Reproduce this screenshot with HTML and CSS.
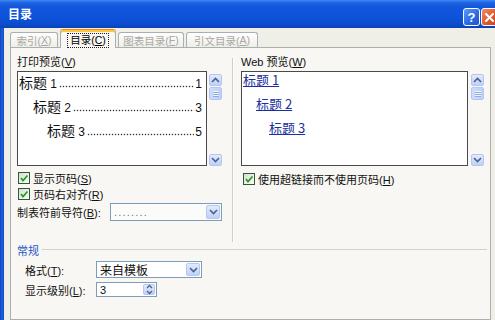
FILE: index.html
```html
<!DOCTYPE html>
<html>
<head>
<meta charset="utf-8">
<link rel="stylesheet" href="styles.css">
</head>
<body>
<div class="window">
  <div class="titlebar">
    <span class="title">目录</span>
    <div class="tbtns">
      <span class="btn help">?</span>
      <span class="btn close"><svg width="11" height="11" viewBox="0 0 11 11"><path d="M2 2 L9 9 M9 2 L2 9" stroke="#fff" stroke-width="2" stroke-linecap="round"/></svg></span>
    </div>
  </div>
  <div class="client">
    <div class="tabs">
      <div class="tab t1">索引(<u>X</u>)</div>
      <div class="tab t2 active"><span class="focus">目录(<u>C</u>)</span></div>
      <div class="tab t3">图表目录(<u>F</u>)</div>
      <div class="tab t4">引文目录(<u>A</u>)</div>
    </div>
    <div class="panel">
      <div class="top">
        <div class="col left">
          <div class="lbl">打印预览(<u>V</u>)</div>
          <div class="prow">
            <div class="preview print">
              <div class="toc"><span class="t">标题</span><span class="n">&nbsp;1</span><span class="dots"></span><span class="pg">1</span></div>
              <div class="toc i1"><span class="t">标题</span><span class="n">&nbsp;2</span><span class="dots"></span><span class="pg">3</span></div>
              <div class="toc i2"><span class="t">标题</span><span class="n">&nbsp;3</span><span class="dots"></span><span class="pg">5</span></div>
            </div>
            <div class="sb">
              <div class="arrow"><svg width="9" height="6" viewBox="0 0 9 6"><path d="M1 5 L4.5 1.5 L8 5" fill="none" stroke="#4d6185" stroke-width="1.6"/></svg></div>
              <div class="thumb"><i></i><i></i><i></i></div>
              <div class="spacer"></div>
              <div class="arrow"><svg width="9" height="6" viewBox="0 0 9 6"><path d="M1 1 L4.5 4.5 L8 1" fill="none" stroke="#4d6185" stroke-width="1.6"/></svg></div>
            </div>
          </div>
          <div class="chk"><span class="box"><svg width="10" height="10" viewBox="0 0 10 10"><path d="M2 5 L4 7.5 L8.5 2.5" fill="none" stroke="#21a121" stroke-width="1.8"/></svg></span><span>显示页码(<u>S</u>)</span></div>
          <div class="chk c2"><span class="box"><svg width="10" height="10" viewBox="0 0 10 10"><path d="M2 5 L4 7.5 L8.5 2.5" fill="none" stroke="#21a121" stroke-width="1.8"/></svg></span><span>页码右对齐(<u>R</u>)</span></div>
          <div class="leader">
            <span>制表符前导符(<u>B</u>):</span>
            <div class="combo lcombo"><span class="ctext dim">........</span><span class="dd"><svg width="9" height="6" viewBox="0 0 9 6"><path d="M1 1 L4.5 4.5 L8 1" fill="none" stroke="#4d6185" stroke-width="1.6"/></svg></span></div>
          </div>
        </div>
        <div class="vsep"></div>
        <div class="col right">
          <div class="lbl">Web 预览(<u>W</u>)</div>
          <div class="prow wrow">
            <div class="preview web">
              <div class="wl"><span class="lnk">标题 1</span></div>
              <div class="wl i1"><span class="lnk">标题 2</span></div>
              <div class="wl i2"><span class="lnk">标题 3</span></div>
            </div>
            <div class="sb">
              <div class="arrow"><svg width="9" height="6" viewBox="0 0 9 6"><path d="M1 5 L4.5 1.5 L8 5" fill="none" stroke="#4d6185" stroke-width="1.6"/></svg></div>
              <div class="thumb"><i></i><i></i><i></i></div>
              <div class="spacer"></div>
              <div class="arrow"><svg width="9" height="6" viewBox="0 0 9 6"><path d="M1 1 L4.5 4.5 L8 1" fill="none" stroke="#4d6185" stroke-width="1.6"/></svg></div>
            </div>
          </div>
          <div class="chk c3"><span class="box"><svg width="10" height="10" viewBox="0 0 10 10"><path d="M2 5 L4 7.5 L8.5 2.5" fill="none" stroke="#21a121" stroke-width="1.8"/></svg></span><span>使用超链接而不使用页码(<u>H</u>)</span></div>
        </div>
      </div>
      <div class="group">
        <div class="gtitle"><span>常规</span><div class="hline"></div></div>
        <div class="field f1">
          <span class="flabel">格式(<u>T</u>):</span>
          <div class="combo fcombo"><span class="ctext">来自模板</span><span class="dd"><svg width="9" height="6" viewBox="0 0 9 6"><path d="M1 1 L4.5 4.5 L8 1" fill="none" stroke="#4d6185" stroke-width="1.6"/></svg></span></div>
        </div>
        <div class="field f2">
          <span class="flabel">显示级别(<u>L</u>):</span>
          <div class="spin"><span class="ctext">3</span><span class="sbtn"><svg width="7" height="11" viewBox="0 0 7 11"><path d="M1 4 L3.5 1.5 L6 4 M1 7 L3.5 9.5 L6 7" fill="none" stroke="#4d6185" stroke-width="1.3"/></svg></span></div>
        </div>
      </div>
    </div>
  </div>
</div>
</body>
</html>
```

FILE: styles.css
```css
* { box-sizing: border-box; }
body {
  margin: 0;
  width: 495px;
  height: 320px;
  overflow: hidden;
  font-family: "Liberation Sans", "Noto Sans CJK SC", sans-serif;
  font-size: 11px;
  color: #111;
}
u { text-decoration: underline; }
.window {
  width: 495px;
  height: 320px;
  display: flex;
  flex-direction: column;
  background: linear-gradient(to right, #0a3aa8 0, #1a5ad8 1px, #1a5ad8 3px, #0c45c0 4px);
  overflow: hidden;
}
.titlebar {
  height: 28px;
  flex: none;
  display: flex;
  justify-content: space-between;
  align-items: flex-start;
  padding-left: 8px;
  background: linear-gradient(to bottom, #3d8af7 0%, #2468e2 8%, #1257dc 22%, #0d53da 60%, #0b4dd0 85%, #0a42b5 100%);
  overflow: hidden;
}
.title {
  color: #fff;
  font-weight: bold;
  font-size: 12px;
  line-height: 28px;
  font-family: "Noto Sans CJK SC", sans-serif;
}
.tbtns {
  display: flex;
  gap: 1px;
  margin-top: 8px;
  margin-right: -3px;
}
.btn {
  width: 17px;
  height: 18px;
  border: 1px solid #fff;
  border-radius: 3px;
  display: flex;
  align-items: center;
  justify-content: center;
}
.help {
  background: linear-gradient(135deg, #5b9bf8, #2a66e2 60%, #1f55cc);
  color: #fff;
  font-weight: bold;
  font-size: 13px;
  font-family: "Liberation Sans", sans-serif;
}
.close {
  background: linear-gradient(135deg, #f08a68, #e05a30 55%, #c8401e);
}
.client {
  flex: 1;
  margin-left: 4px;
  background: #efeee7;
  padding: 1px 0 0 6px;
  display: flex;
  flex-direction: column;
  min-height: 0;
}
.tabs {
  display: flex;
  align-items: flex-end;
  gap: 2px;
  height: 18px;
  flex: none;
  position: relative;
  z-index: 1;
}
.tab {
  height: 15px;
  border: 1px solid #a9b0b1;
  border-bottom: none;
  border-radius: 3px 3px 0 0;
  background: linear-gradient(#fefefe, #efeee8);
  color: #a9a8a2;
  display: flex;
  align-items: center;
  justify-content: center;
  white-space: nowrap;
  font-size: 10.5px;
}
.t1 { width: 48px; }
.t2 { width: 56px; }
.t3 { width: 66px; }
.t4 { width: 72px; }
.tab.active {
  height: 19px;
  margin-bottom: -1px;
  border-top: 1px solid #e68b2c;
  box-shadow: inset 0 2px 0 #ffc73c;
  background: #f8f7f3;
  color: #000;
  padding-top: 2px;
}
.focus {
  outline: 1px dotted #222;
  padding: 0 2px;
  line-height: 13px;
}
.panel {
  width: 481px;
  flex: 1;
  border: 1px solid #a9b0b1;
  background: #f8f7f3;
  padding: 8px 6px 0 6px;
}
.top {
  display: flex;
  height: 186px;
}
.col.left { width: 205px; flex: none; }
.col.right { width: 243px; flex: none; }
.vsep {
  width: 2px;
  height: 184px;
  margin: 2px 7px 0 10px;
  border-left: 1px solid #cfcec5;
  border-right: 1px solid #fff;
  flex: none;
}
.lbl {
  height: 13px;
  line-height: 13px;
  margin-bottom: 2px;
  white-space: nowrap;
}
.prow {
  display: flex;
  height: 95px;
  gap: 2px;
}
.wrow { gap: 3px; }
.preview {
  flex: 1;
  background: #fff;
  border: 1px solid #4a4a4a;
  overflow: hidden;
}
.print { padding: 0 4px 0 1px; }
.toc {
  display: flex;
  align-items: baseline;
  height: 20px;
  line-height: 20px;
  margin-bottom: 4px;
  white-space: nowrap;
}
.toc .t {
  font-family: "Noto Sans CJK SC", sans-serif;
  font-size: 14px;
}
.toc .n, .toc .pg {
  font-size: 12px;
  font-family: "Liberation Sans", sans-serif;
}
.toc .dots {
  flex: 1;
  align-self: stretch;
  margin: 0 1px 0 2px;
  background-image: radial-gradient(circle, #333 0.75px, transparent 1.05px);
  background-size: 3px 3px;
  background-repeat: repeat-x;
  background-position: 0 13px;
}
.i1 { padding-left: 14px; }
.i2 { padding-left: 28px; }
.web { padding: 0 0 0 1px; }
.wl {
  height: 16px;
  line-height: 16px;
  margin-bottom: 8px;
  white-space: nowrap;
}
.wl.i1 { padding-left: 13px; }
.wl.i2 { padding-left: 26px; }
.lnk {
  color: #1b2f9e;
  text-decoration: underline;
  font-size: 13px;
  font-family: "Noto Sans CJK SC", sans-serif;
}
.sb {
  width: 13px;
  flex: none;
  display: flex;
  flex-direction: column;
  padding-top: 3px;
}
.arrow {
  height: 12px;
  border: 1px solid #b4c6f1;
  border-radius: 2px;
  background: linear-gradient(#e2ebfe, #bfd1f8);
  display: flex;
  align-items: center;
  justify-content: center;
}
.thumb {
  height: 13px;
  margin-top: 1px;
  border: 1px solid #b4c6f1;
  border-radius: 2px;
  background: linear-gradient(to right, #cfdcfb, #bdd0f8);
  display: flex;
  flex-direction: column;
  align-items: center;
  justify-content: center;
  gap: 1px;
}
.thumb i {
  display: block;
  width: 6px;
  height: 1px;
  background: #eef3ff;
  box-shadow: 0 1px 0 #98acdc;
}
.spacer { flex: 1; }
.chk {
  display: flex;
  align-items: center;
  gap: 3px;
  height: 13px;
  margin-top: 5px;
  margin-left: 1px;
  white-space: nowrap;
}
.chk.c2 { margin-top: 3px; }
.chk.c3 { margin-top: 6px; margin-left: 2px; }
.box {
  width: 12px;
  height: 12px;
  border: 1px solid #2b5c3a;
  background: linear-gradient(135deg, #dcdcd6, #fbfbf9);
  display: flex;
  align-items: center;
  justify-content: center;
  flex: none;
}
.leader {
  display: flex;
  align-items: center;
  margin-top: 3px;
  height: 18px;
  white-space: nowrap;
}
.combo, .spin {
  display: flex;
  align-items: stretch;
  border: 1px solid #7f9db9;
  background: #fff;
}
.lcombo {
  width: 112px;
  height: 18px;
  margin-left: auto;
  background: #fbfbfa;
}
.ctext {
  flex: 1;
  padding-left: 3px;
  display: flex;
  align-items: center;
  white-space: nowrap;
}
.dim { color: #777; letter-spacing: 1.2px; font-size: 11px; }
.dd {
  width: 14px;
  margin: 1px;
  border: 1px solid #b4c6f1;
  border-radius: 2px;
  background: linear-gradient(#e2ebfe, #bfd1f8);
  display: flex;
  align-items: center;
  justify-content: center;
}
.group { padding-top: 1px; }
.gtitle {
  display: flex;
  align-items: center;
  height: 13px;
  color: #1d55c8;
}
.hline {
  flex: 1;
  height: 1px;
  background: #d3d2c6;
  margin-left: 3px;
  margin-right: -3px;
}
.field {
  display: flex;
  align-items: center;
  padding-left: 8px;
  white-space: nowrap;
}
.f1 { margin-top: 5px; height: 17px; }
.f2 { margin-top: 4px; height: 15px; }
.flabel { width: 71px; flex: none; }
.fcombo { width: 106px; height: 17px; }
.fcombo .ctext { font-size: 12px; }
.spin { width: 61px; height: 15px; }
.sbtn {
  width: 12px;
  margin: 1px;
  border: 1px solid #b4c6f1;
  border-radius: 2px;
  background: linear-gradient(#e2ebfe, #bfd1f8);
  display: flex;
  align-items: center;
  justify-content: center;
}
```
